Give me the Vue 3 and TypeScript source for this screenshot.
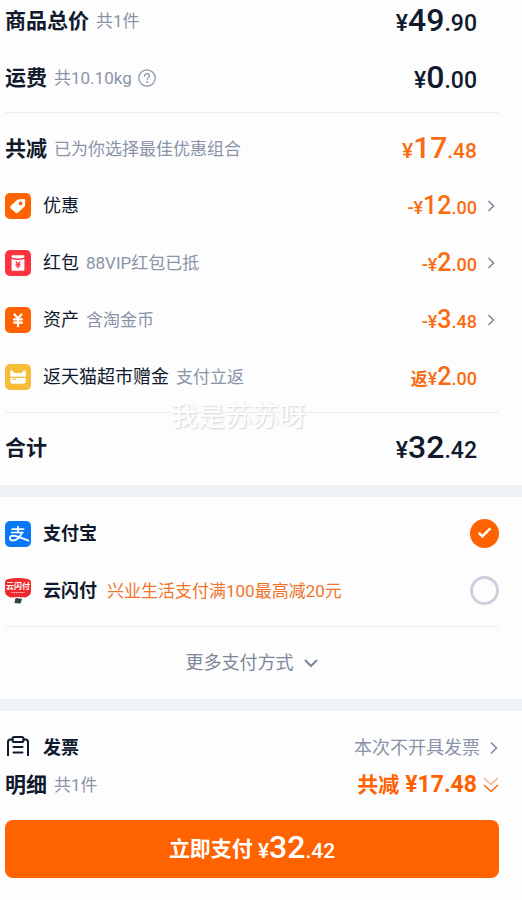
<script setup lang="ts">
import { ref } from 'vue'

interface Discount {
  id: string
  name: string
  note: string
  sign: string
  whole: string
  cents: string
  link: boolean
}

const discounts: Discount[] = [
  { id: 'coupon', name: '优惠', note: '', sign: '-', whole: '12', cents: '.00', link: true },
  { id: 'packet', name: '红包', note: '88VIP红包已抵', sign: '-', whole: '2', cents: '.00', link: true },
  { id: 'asset', name: '资产', note: '含淘金币', sign: '-', whole: '3', cents: '.48', link: true },
  { id: 'tmall', name: '返天猫超市赠金', note: '支付立返', sign: '返', whole: '2', cents: '.00', link: false },
]

const method = ref<string>('alipay')
</script>

<template>
  <main class="page">
    <section class="summary">
      <div class="group first">
        <div class="row">
          <h2 class="title">商品总价</h2>
          <span class="note">共1件</span>
          <span class="price"><span class="sym">¥</span><b>49</b>.90</span>
        </div>
        <div class="row">
          <h2 class="title">运费</h2>
          <span class="note">共10.10kg</span>
          <button class="help" type="button" aria-label="运费说明">
            <svg width="18" height="18" viewBox="0 0 18 18" fill="none" stroke="currentColor" stroke-width="1.2" stroke-linecap="round">
              <circle cx="9" cy="9" r="8.2" />
              <path d="M6.5 7.2C6.5 5.6 7.6 4.7 9 4.7s2.5.9 2.5 2.2c0 1.6-2.4 1.9-2.4 3.6" />
              <circle cx="9.1" cy="13" r=".4" fill="currentColor" />
            </svg>
          </button>
          <span class="price"><span class="sym">¥</span><b>0</b>.00</span>
        </div>
      </div>

      <div class="group lined">
        <div class="row">
          <h2 class="title">共减</h2>
          <span class="note">已为你选择最佳优惠组合</span>
          <span class="price accent total-cut"><span class="sym">¥</span><b>17</b>.48</span>
        </div>
        <component
          :is="d.link ? 'button' : 'div'"
          v-for="d in discounts"
          :key="d.id"
          :type="d.link ? 'button' : undefined"
          class="row"
        >
          <svg class="icon" :class="d.id" width="26" height="26" viewBox="0 0 26 26" aria-hidden="true">
            <rect class="tile" width="26" height="26" rx="5" />
            <g v-if="d.id === 'coupon'">
              <path fill="#fff" d="M13.2 6.6 18.6 5.9c1-.1 1.6.6 1.6 1.5l-.2 5.2c0 .5-.3.9-.6 1.2l-6.6 6c-.7.6-1.6.6-2.2 0l-5-4.6c-.7-.6-.7-1.5 0-2.1l6.4-6c.4-.3.8-.5 1.2-.5Z" />
              <circle class="tile" cx="15.6" cy="10.4" r="1.9" />
            </g>
            <g v-else-if="d.id === 'packet'">
              <path fill="#fff" d="M6.6 6.2c0-.6.4-1 1-1h10.8c.6 0 1 .4 1 1v1.2c-4 1.3-8.8 1.3-12.8 0ZM6.6 9c4 1.2 8.8 1.2 12.8 0v10.8c0 .6-.4 1-1 1H7.6c-.6 0-1-.4-1-1Z" />
              <path fill="none" stroke="#fd3440" stroke-width="1.2" d="m10.8 11.5 2.2 2.7 2.2-2.7M10.6 14.4h4.8M10.6 16.2h4.8M13 14v4.5" />
            </g>
            <path v-else-if="d.id === 'asset'" fill="none" stroke="#fff" stroke-width="2.2" stroke-linecap="round" d="m9.5 7.5 3.5 3.8 3.5-3.8M9 12.3h8M9 15.6h8M13 12v7.2" />
            <g v-else>
              <path fill="#fff" d="M5.2 12.8V7.4c0-1.3 1-1.6 1.8-.9L9.5 8.7q3.5.8 7 0L19 6.500c.8-.7 1.8-.4 1.8.9v5.400ZM5.2 14h15.600v3.200c0 1.500-1 2.500-2.500 2.500H7.700c-1.500 0-2.500-1-2.500-2.500Z" />
              <path stroke="#f7bd36" stroke-width="1.4" stroke-linecap="round" d="M8.200 15.400h2.600M15.200 13.400h2.600" />
            </g>
          </svg>
          <span class="name">{{ d.name }}</span>
          <span v-if="d.note" class="note">{{ d.note }}</span>
          <span class="price accent small" :class="{ open: d.link }"><span :class="{ back: !d.link }">{{ d.sign }}</span><span class="sym">¥</span><b>{{ d.whole }}</b>{{ d.cents }}</span>
          <svg v-if="d.link" class="chev" width="8" height="12" viewBox="0 0 8 12" aria-hidden="true"><path d="m1.500 1 5 5-5 5" /></svg>
        </component>
      </div>

      <div class="row lined sum">
        <h2 class="title">合计</h2>
        <span class="price"><span class="sym">¥</span><b>32</b>.42</span>
        <span class="watermark">我是苏苏呀</span>
      </div>
    </section>

    <section class="block">
      <div class="group methods">
        <label class="row">
          <svg class="icon" width="26" height="26" viewBox="0 0 26 26" aria-hidden="true">
            <rect width="26" height="26" rx="5" fill="#0b78f8" />
            <g fill="none" stroke="#fff" stroke-linecap="round">
              <path stroke-width="1.7" d="M7.200 8.200h11.400M6.600 11.500h11.200M12.900 5.600v5.900" />
              <path stroke-width="1.8" d="M16.800 11.700c-1.500 4.400-5.200 7.800-8.500 7.800-4.300 0-4.600-4.800-.3-4.900 3.600 0 8 2.600 15.400 5" />
            </g>
          </svg>
          <span class="pay">支付宝</span>
          <input v-model="method" class="radio" type="radio" name="method" value="alipay" />
        </label>
        <label class="row">
          <svg class="icon" width="26" height="26" viewBox="0 0 26 26" aria-hidden="true">
            <path d="M2.500 1.200Q13-1 23.500 1.200q2.500.7 2.500 3v9.600q0 3-2.500 4.200l-3 1.500Q13 18.600 5.500 19.500l-3-1.500Q0 16.800 0 13.800V4.200q0-2.300 2.500-3Z" fill="#ee2a2e" />
            <path d="m11 20.300 6 .4-1.500 4.800-5.800-.6Z" fill="#174850" />
            <path d="m10.500 20.300 2.500.1-1 4.800-2.500-.3Z" fill="#69333c" />
            <text x="13" y="11" text-anchor="middle" class="logo-text">云闪付</text>
            <path d="M6.500 14.500h13" stroke="#fbb" stroke-width="1" stroke-dasharray="1.5 .5" />
          </svg>
          <span class="pay">云闪付</span>
          <span class="promo">兴业生活支付满100最高减20元</span>
          <input v-model="method" class="radio" type="radio" name="method" value="unionpay" />
        </label>
      </div>
      <button class="more lined" type="button">
        更多支付方式
        <svg width="16" height="10" viewBox="0 0 16 10" aria-hidden="true"><path d="m2 2 6 6 6-6" /></svg>
      </button>
    </section>

    <section class="block invoice">
      <button class="row" type="button">
        <svg class="icon" width="26" height="26" viewBox="0 0 26 26" fill="none" stroke="#111a2c" stroke-width="2" stroke-linecap="round" aria-hidden="true">
          <path d="M7.500 4.500H5.500Q3 4.500 3 7v14.500Q3 24 5.500 24h15q2.500 0 2.500-2.500V7q0-2.500-2.500-2.500h-2M8.500 12h9M8.500 17.500h9" />
          <rect x="7.500" y="2" width="11" height="5" rx="1.8" />
        </svg>
        <span class="pay">发票</span>
        <span class="choice">本次不开具发票</span>
        <svg class="next" width="10" height="14" viewBox="0 0 10 14" aria-hidden="true"><path d="m2 1.500 5.500 5.500L2 12.500" /></svg>
      </button>
    </section>

    <footer class="bar">
      <div class="row">
        <h2 class="title">明细</h2>
        <span class="note">共1件</span>
        <button class="detail" type="button">
          <span class="cut">共减</span>
          <span class="flat">¥17.48</span>
          <svg width="16" height="18" viewBox="0 0 16 18" fill="none" stroke="#f96b10" stroke-width="1.6" aria-hidden="true">
            <path opacity=".5" d="m1 2 7 6.500L15 2" />
            <path d="m1 9 7 6.500L15 9" />
          </svg>
        </button>
      </div>
      <button class="submit" type="button">
        <span>立即支付</span>
        <span class="amount"><span class="sym">¥</span><b>32</b>.42</span>
      </button>
    </footer>
  </main>
</template>

<style>
body {
  background: #fdfdfd;
}
</style>

<style scoped>
.page {
  min-height: 100vh;
  overflow: hidden;
  background: #fdfdfd;
  color: #111a2c;
  font-family: Roboto, "Noto Sans CJK SC", sans-serif;
  font-size: 18px;
  line-height: 26px;
}
button {
  margin: 0;
  padding: 0;
  border: 0;
  background: none;
  color: inherit;
  font: inherit;
  text-align: left;
  cursor: pointer;
}
.summary,
.block,
.bar {
  padding: 0 23px 0 5px;
}
.row {
  display: flex;
  align-items: center;
  width: 100%;
  height: 57px;
  white-space: nowrap;
}
.group {
  padding: 7px 0;
}
.first {
  margin-top: -8px;
  padding: 0 0 6px;
}
.lined {
  border-top: 1px solid #ededf0;
}
.title {
  margin: 0 7px 0 0;
  font-size: 21px;
  font-weight: 700;
}
.note {
  color: #8a94a8;
  font-size: 17px;
}
.help {
  display: flex;
  margin-left: 6px;
  color: #8a94a8;
}
.icon {
  flex: none;
  margin-right: 12px;
}
.coupon .tile,
.asset .tile {
  fill: #ff6200;
}
.packet .tile {
  fill: #fd3440;
}
.tmall .tile {
  fill: #f7bd36;
}
.name {
  margin-right: 7px;
}
.price {
  margin-left: auto;
  margin-right: 22px;
  padding-top: 2px;
  font-size: 23px;
  font-weight: 500;
}
.price b {
  font-size: 32px;
  font-weight: 500;
}
.accent {
  color: #f96b10;
}
.total-cut {
  font-size: 21px;
}
.total-cut b {
  font-size: 30px;
}
.small {
  font-size: 18px;
}
.small b {
  font-size: 25px;
}
.back {
  font-size: 17px;
  font-weight: 700;
}
.open {
  margin-right: 10px;
}
.chev,
.more svg,
.next {
  flex: none;
  fill: none;
  stroke: #7d879a;
  stroke-width: 1.5;
}
.chev {
  margin-right: 4px;
}
.sum {
  position: relative;
  height: 70px;
  padding-bottom: 2px;
}
.watermark {
  position: absolute;
  top: -9px;
  left: 166px;
  color: #fff;
  font-size: 27px;
  text-shadow: 1px 1px 2px #d0d0d4;
}
.block {
  border-top: 12px solid #eff3f7;
}
.methods {
  padding-top: 8px;
}
.pay {
  font-weight: 700;
}
.promo {
  margin-left: 10px;
  color: #f0742c;
  font-size: 17px;
}
.logo-text {
  fill: #fff;
  font-size: 8px;
  font-weight: 700;
}
.radio {
  flex: none;
  width: 29px;
  height: 29px;
  margin: 0 0 0 auto;
  border: 3px solid #ccd0dc;
  border-radius: 50%;
  appearance: none;
}
.radio:checked {
  display: grid;
  place-items: center;
  border: 0;
  background: #ff6200;
}
.radio:checked::before {
  content: "";
  width: 10px;
  height: 4px;
  margin-bottom: 4px;
  border: solid #fff;
  border-width: 0 0 3px 3px;
  border-radius: 1px;
  transform: rotate(-45deg);
}
.more {
  display: flex;
  align-items: center;
  justify-content: center;
  gap: 9px;
  width: 100%;
  height: 73px;
  color: #7d879a;
}
.more svg {
  stroke-width: 2;
}
.invoice {
  box-sizing: border-box;
  height: 57px;
  padding-top: 8px;
  overflow: hidden;
}
.choice {
  margin-left: auto;
  margin-right: 9px;
  color: #8a94a8;
}
.bar {
  padding-bottom: 22px;
}
.detail {
  display: flex;
  align-items: center;
  gap: 6px;
  margin-left: auto;
  color: #ff6200;
}
.cut {
  font-size: 21px;
  font-weight: 700;
}
.flat {
  font-size: 23px;
  font-weight: 700;
}
.submit {
  display: flex;
  align-items: center;
  justify-content: center;
  gap: 5px;
  width: 100%;
  height: 58px;
  margin-top: 7px;
  border-radius: 8px;
  background: #ff6200;
  color: #fff;
  font-size: 21px;
  font-weight: 700;
}
.amount {
  font-size: 21px;
  font-weight: 500;
}
.amount b {
  font-size: 32px;
  font-weight: 500;
}
</style>
